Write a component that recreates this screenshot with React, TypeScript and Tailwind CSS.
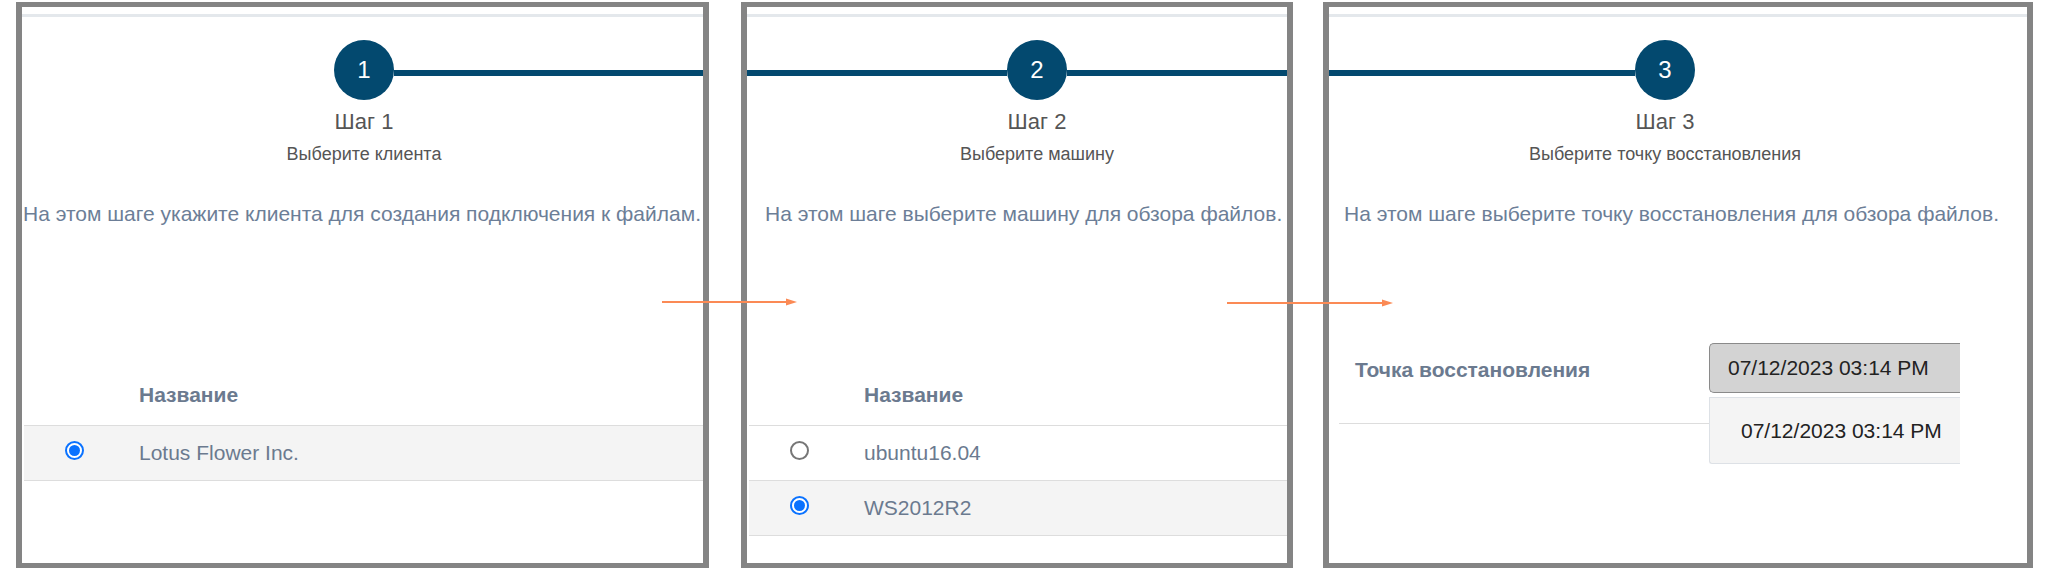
import React from "react";

interface StepHeaderProps {
  n: number;
  title: string;
  subtitle: string;
  widthClass: string;
  lineLeft?: boolean;
  lineRight?: boolean;
}

const StepHeader: React.FC<StepHeaderProps> = ({ n, title, subtitle, widthClass, lineLeft, lineRight }) => {
  return (
    <div className={`${widthClass} shrink-0 flex flex-col items-center`}>
      <div className="flex w-full items-start">
        <div className={`flex-1 mt-[30px] h-[6px] ${lineLeft ? "bg-[#03496f]" : ""}`} />
        <div className="w-[60px] h-[60px] rounded-full bg-[#03496f] text-white text-[24px] leading-none flex items-center justify-center">
          {n}
        </div>
        <div className={`flex-1 mt-[30px] h-[6px] ${lineRight ? "bg-[#03496f]" : ""}`} />
      </div>
      <div className="mt-[10px] text-[22px] leading-[24px] text-[#555555] whitespace-nowrap">{title}</div>
      <div className="mt-[10px] text-[18px] leading-[20px] text-[#555555] whitespace-nowrap">{subtitle}</div>
    </div>
  );
};

const Radio: React.FC<{ checked?: boolean }> = ({ checked }) =>
  checked ? (
    <div className="w-[19px] h-[19px] rounded-full border-2 border-[#0a72ff] bg-white flex items-center justify-center">
      <div className="w-[11px] h-[11px] rounded-full bg-[#0a72ff]" />
    </div>
  ) : (
    <div className="w-[19px] h-[19px] rounded-full border-2 border-[#767676] bg-white" />
  );

const Row: React.FC<{ label: string; checked?: boolean }> = ({ label, checked }) => (
  <div className={`flex items-center h-[55px] border-t border-[#dddddd] ${checked ? "bg-[#f4f4f4]" : "bg-white"}`}>
    <div className="w-[100px] flex justify-center mb-[5px]">
      <Radio checked={checked} />
    </div>
    <div className="pl-[15px] text-[21px] leading-[24px] text-[#6b7a8f]">{label}</div>
  </div>
);

const Table: React.FC<{ children: React.ReactNode }> = ({ children }) => (
  <div className="ml-[2px] mt-[157px]">
    <div className="pl-[115px] pb-[18px] text-[21px] leading-[24px] font-bold text-[#6b7a8f]">Название</div>
    <div className="border-b border-[#dddddd]">{children}</div>
  </div>
);

const Panel: React.FC<{ widthClass: string; children: React.ReactNode }> = ({ widthClass, children }) => (
  <div className={`${widthClass} h-[566px] shrink-0 border-x-[6px] border-y-[5px] border-[#848484] bg-white overflow-hidden`}>
    <div className="mt-[7px] h-[3px] bg-[#e4e8ec]" />
    <div className="mt-[23px]">{children}</div>
  </div>
);

const Arrow: React.FC<{ className: string; length: number }> = ({ className, length }) => (
  <svg className={`absolute ${className}`} width={length} height={10} viewBox={`0 0 ${length} 10`}>
    <line x1={0} y1={5} x2={length - 10} y2={5} stroke="#fb8a55" strokeWidth={2} />
    <polygon points={`${length - 11},1.5 ${length},5 ${length - 11},8.5`} fill="#fb8a55" />
  </svg>
);

export default function App() {
  return (
    <div className="relative w-[2048px] h-[584px] bg-white font-['Liberation_Sans',Arial,sans-serif] flex items-start pt-[2px] pl-[16px]">
      <Panel widthClass="w-[693px]">
        <StepHeader n={1} title="Шаг 1" subtitle="Выберите клиента" widthClass="w-[684px]" lineRight />
        <div className="mt-[38px] pl-[1px] text-[21px] leading-[24px] text-[#6c7e97] whitespace-nowrap">
          На этом шаге укажите клиента для создания подключения к файлам.
        </div>
        <Table>
          <Row label="Lotus Flower Inc." checked />
        </Table>
      </Panel>

      <div className="w-[32px] shrink-0" />

      <Panel widthClass="w-[552px]">
        <StepHeader n={2} title="Шаг 2" subtitle="Выберите машину" widthClass="w-[580px]" lineLeft lineRight />
        <div className="mt-[38px] pl-[18px] text-[21px] leading-[24px] text-[#6c7e97] whitespace-nowrap">
          На этом шаге выберите машину для обзора файлов.
        </div>
        <Table>
          <Row label="ubuntu16.04" />
          <Row label="WS2012R2" checked />
        </Table>
      </Panel>

      <div className="w-[30px] shrink-0" />

      <Panel widthClass="w-[710px]">
        <StepHeader
          n={3}
          title="Шаг 3"
          subtitle="Выберите точку восстановления"
          widthClass="w-[672px]"
          lineLeft
        />
        <div className="mt-[38px] pl-[15px] text-[21px] leading-[24px] text-[#6c7e97] whitespace-nowrap">
          На этом шаге выберите точку восстановления для обзора файлов.
        </div>

        {/* restore point picker with its open list */}
        <div className="ml-[10px] mt-[117px] w-[621px] h-[81px] pl-[16px] flex items-start border-b border-[#dddddd]">
          <div className="w-[354px] mt-[15px] text-[21px] leading-[24px] font-bold text-[#6b7a8f] whitespace-nowrap">
            Точка восстановления
          </div>
          <div className="relative">
            <div className="w-[251px] h-[50px] pl-[18px] flex items-center bg-[#d3d3d3] border-y-[1.5px] border-l-[1.5px] border-[#8a8a8a] rounded-l-[5px] text-[21px] text-[#222222] whitespace-nowrap">
              07/12/2023 03:14 PM
            </div>
            <div className="absolute left-0 top-[54px] w-[251px] h-[67px] pl-[31px] flex items-center bg-[#f4f4f4] border-y border-l border-[#dde1e6] rounded-bl-[3px] text-[21px] text-[#222222] whitespace-nowrap">
              07/12/2023 03:14 PM
            </div>
          </div>
        </div>
      </Panel>

      <Arrow className="left-[662px] top-[297px]" length={135} />
      <Arrow className="left-[1227px] top-[298px]" length={166} />
    </div>
  );
}
